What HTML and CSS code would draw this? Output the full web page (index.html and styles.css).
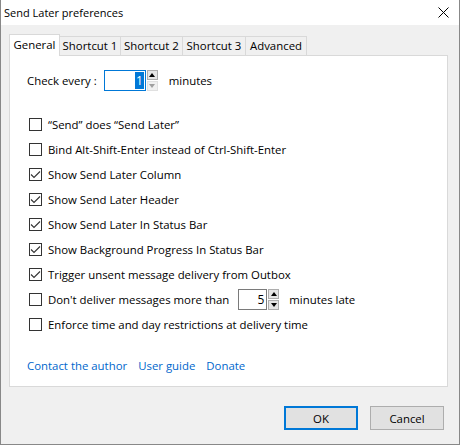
FILE: index.html
```html
<!DOCTYPE html>
<html>
<head>
<meta charset="utf-8">
<link rel="stylesheet" href="styles.css">
</head>
<body>
<div class="window">
  <div class="titlebar">
    <span class="title">Send Later preferences</span>
    <svg class="close" width="11" height="11" viewBox="0 0 11 11"><path d="M0.5 0.5 L10.5 10.5 M10.5 0.5 L0.5 10.5" stroke="#000" stroke-width="1" fill="none"/></svg>
  </div>
  <div class="body">
    <div class="tabs">
      <div class="tab active t1">General</div>
      <div class="tab t2">Shortcut 1</div>
      <div class="tab t3">Shortcut 2</div>
      <div class="tab t4">Shortcut 3</div>
      <div class="tab t5">Advanced</div>
    </div>
    <div class="panel">
      <div class="check-every">
        <span class="label">Check every :</span>
        <div class="numfield focused">
          <div class="numbox wide"><span class="sel">1</span></div>
          <div class="spin">
            <div class="spin-btn up"><span class="tri-up"></span></div>
            <div class="spin-btn down disabled"><span class="tri-down"></span></div>
          </div>
        </div>
        <span class="unit">minutes</span>
      </div>
      <div class="options">
        <div class="opt"><span class="cb"></span><span>“Send” does “Send Later”</span></div>
        <div class="opt"><span class="cb"></span><span>Bind Alt-Shift-Enter instead of Ctrl-Shift-Enter</span></div>
        <div class="opt"><span class="cb checked"><svg width="11" height="11" viewBox="0 0 11 11"><path d="M1 5.5 L4 8.5 L10 2.5" stroke="#333" stroke-width="1.1" fill="none"/></svg></span><span>Show Send Later Column</span></div>
        <div class="opt"><span class="cb checked"><svg width="11" height="11" viewBox="0 0 11 11"><path d="M1 5.5 L4 8.5 L10 2.5" stroke="#333" stroke-width="1.1" fill="none"/></svg></span><span>Show Send Later Header</span></div>
        <div class="opt"><span class="cb checked"><svg width="11" height="11" viewBox="0 0 11 11"><path d="M1 5.5 L4 8.5 L10 2.5" stroke="#333" stroke-width="1.1" fill="none"/></svg></span><span>Show Send Later In Status Bar</span></div>
        <div class="opt"><span class="cb checked"><svg width="11" height="11" viewBox="0 0 11 11"><path d="M1 5.5 L4 8.5 L10 2.5" stroke="#333" stroke-width="1.1" fill="none"/></svg></span><span>Show Background Progress In Status Bar</span></div>
        <div class="opt"><span class="cb checked"><svg width="11" height="11" viewBox="0 0 11 11"><path d="M1 5.5 L4 8.5 L10 2.5" stroke="#333" stroke-width="1.1" fill="none"/></svg></span><span>Trigger unsent message delivery from Outbox</span></div>
        <div class="opt"><span class="cb"></span><span>Don't deliver messages more than</span>
          <div class="numfield inline">
            <div class="numbox narrow"><span>5</span></div>
            <div class="spin">
              <div class="spin-btn up"><span class="tri-up"></span></div>
              <div class="spin-btn down"><span class="tri-down"></span></div>
            </div>
          </div>
          <span class="unit2">minutes late</span>
        </div>
        <div class="opt"><span class="cb"></span><span>Enforce time and day restrictions at delivery time</span></div>
      </div>
      <div class="links">
        <a class="link">Contact the author</a>
        <a class="link">User guide</a>
        <a class="link">Donate</a>
      </div>
    </div>
    <div class="buttons">
      <div class="btn default">OK</div>
      <div class="btn">Cancel</div>
    </div>
  </div>
</div>
</body>
</html>
```
FILE: styles.css
```css
* { box-sizing: border-box; }
html, body { margin: 0; padding: 0; }
body {
  width: 460px;
  height: 445px;
  overflow: hidden;
  font-family: "Open Sans", "Noto Sans", sans-serif;
  font-size: 11.4px;
  color: #000;
  background: #f0f0f0;
}
.window {
  width: 460px;
  height: 445px;
  border-left: 1px solid #888;
  border-right: 1px solid #888;
  border-bottom: 1px solid #888;
  display: flex;
  flex-direction: column;
  background: #f0f0f0;
}
.titlebar {
  height: 25px;
  background: #fff;
  display: flex;
  align-items: center;
  justify-content: space-between;
  padding: 0 10px 0 3px;
  flex: none;
}
.title { font-size: 11px; }
.close { display: block; margin-top: -1px; }
.body {
  flex: 1;
  display: flex;
  flex-direction: column;
  padding: 9px 11px 0 8px;
}
.tabs {
  display: flex;
  align-items: flex-end;
  height: 21px;
  flex: none;
}
.tab {
  height: 19px;
  padding: 0;
  border: 1px solid #d9d9d9;
  border-bottom: none;
  background: #f0f0f0;
  display: flex;
  align-items: center;
  justify-content: center;
  margin-left: -1px;
  line-height: 1;
  white-space: nowrap;
}
.t1 { width: 51px; }
.t2 { width: 62px; }
.t3 { width: 63px; }
.t4 { width: 64px; }
.t5 { width: 62px; }
.tab.active {
  height: 22px;
  margin-left: 0;
  margin-bottom: -1px;
  background: #fff;
  position: relative;
  z-index: 1;
  padding-bottom: 2px;
}
.panel {
  height: 332px;
  border: 1px solid #d9d9d9;
  background: #fff;
  padding: 14px 0 0 17px;
  display: flex;
  flex-direction: column;
}
.check-every {
  display: flex;
  align-items: center;
  height: 21px;
}
.check-every .label { margin-right: 7px; }
.numfield { display: flex; height: 21px; }
.numbox {
  height: 21px;
  border: 1px solid #7a7a7a;
  background: #fff;
  display: flex;
  align-items: center;
  justify-content: flex-end;
  padding-right: 1px;
  font-size: 12px;
}
.focused .numbox { border-color: #0078d7; }
.numbox.wide { width: 42px; }
.numbox.narrow { width: 29px; padding-right: 2px; }
.sel { background: #0078d7; color: #fff; padding: 0 1px; line-height: 17px; }
.spin {
  width: 11px;
  margin-left: 1px;
  display: flex;
  flex-direction: column;
  gap: 1px;
}
.spin-btn {
  flex: 1;
  background: #e5e5e5;
  border: 1px solid #adadad;
  display: flex;
  align-items: center;
  justify-content: center;
}
.spin-btn.disabled { background: #f0f0f0; border-color: #e0e0e0; }
.tri-up {
  width: 0; height: 0;
  border-left: 3.5px solid transparent;
  border-right: 3.5px solid transparent;
  border-bottom: 4px solid #000;
}
.tri-down {
  width: 0; height: 0;
  border-left: 3.5px solid transparent;
  border-right: 3.5px solid transparent;
  border-top: 4px solid #000;
}
.disabled .tri-down { border-top-color: #a0a0a0; }
.unit { margin-left: 11px; }
.options {
  margin-top: 21px;
  display: flex;
  flex-direction: column;
}
.opt {
  height: 25px;
  display: flex;
  align-items: center;
  padding-left: 2px;
}
.cb {
  width: 13px;
  height: 13px;
  border: 1px solid #333;
  background: #fff;
  margin-right: 6px;
  display: flex;
  align-items: center;
  justify-content: center;
  flex: none;
}
.cb svg { display: block; }
.numfield.inline { margin-left: 9px; }
.unit2 { margin-left: 10px; }
.links {
  margin-top: 21px;
  display: flex;
  gap: 11px;
}
.link { color: #0066cc; cursor: pointer; }
.buttons {
  display: flex;
  justify-content: flex-end;
  gap: 12px;
  margin-top: 19px;
  padding-right: 4px;
}
.btn {
  width: 74px;
  height: 24px;
  border: 1px solid #adadad;
  background: #e1e1e1;
  display: flex;
  align-items: center;
  justify-content: center;
}
.btn.default { border: 2px solid #0078d7; }
```
